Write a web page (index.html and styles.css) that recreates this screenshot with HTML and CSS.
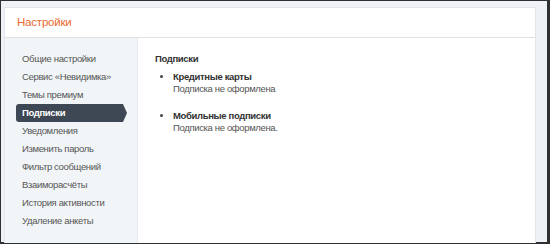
FILE: index.html
```html
<!DOCTYPE html>
<html lang="ru">
<head>
    <meta charset="UTF-8">
    <meta name="viewport" content="width=device-width, initial-scale=1.0">
    <title>Настройки</title>
    <link rel="stylesheet" href="styles.css">
</head>
<body>
    <div class="frame">
      <div class="panel">
        <div class="panelHead">Настройки</div>
        <div class="panelBody">
          <ul class="sideMenu">
            <li>Общие настройки</li>
            <li>Сервис «Невидимка»</li>
            <li>Темы премиум</li>
            <li class="active">Подписки</li>
            <li>Уведомления</li>
            <li>Изменить пароль</li>
            <li>Фильтр сообщений</li>
            <li>Взаиморасчёты</li>
            <li>История активности</li>
            <li>Удаление анкеты</li>
          </ul>
          <div class="content">
            <h2 class="contentTitle">Подписки</h2>
            <ul class="subList">
              <li>
                <b>Кредитные карты</b>
                <span>Подписка не оформлена</span>
              </li>
              <li>
                <b>Мобильные подписки</b>
                <span>Подписка не оформлена.</span>
              </li>
            </ul>
          </div>
        </div>
      </div>
    </div>
</body>
</html>
```

FILE: styles.css
```css
html, body {
  margin: 0;
  padding: 0;
  height: 100%;
}
body {
  font-family: "Liberation Sans", Arial, sans-serif;
  font-size: 9.5px;
  letter-spacing: -0.35px;
  color: #444;
  background: #2b2b2b;
}
.frame {
  box-sizing: border-box;
  height: 244px;
  border-style: solid;
  border-color: #2f2f2f;
  border-width: 1px 3px 2px 1px;
  background: #eef2f6;
  padding: 6px 11px 0 3px;
}
.panel {
  height: 100%;
  background: #fff;
  border: 1px solid #e2e6ea;
  border-bottom: none;
  display: flex;
  flex-direction: column;
}
.panelHead {
  height: 29px;
  line-height: 29px;
  padding-left: 12px;
  font-size: 11.5px;
  letter-spacing: -0.2px;
  color: #ea6a30;
  border-bottom: 1px solid #e0e0e0;
}
.panelBody {
  flex: 1;
  display: flex;
}
.sideMenu {
  list-style: none;
  margin: 0;
  padding: 12px 0 0 11px;
  width: 121px;
  background: #f2f5f8;
  border-right: 1px solid #e6eaee;
}
.sideMenu li {
  height: 18px;
  line-height: 18px;
  padding-left: 6px;
  color: #555;
}
.sideMenu li.active {
  position: relative;
  width: 101px;
  background: #3e4754;
  color: #fff;
  font-weight: bold;
  border-radius: 3px 0 0 3px;
}
.sideMenu li.active::after {
  content: "";
  position: absolute;
  right: -4px;
  top: 0;
  border-style: solid;
  border-width: 9px 0 9px 4px;
  border-color: transparent transparent transparent #3e4754;
}
.content {
  flex: 1;
  padding: 12px 17px;
}
.contentTitle {
  margin: 0;
  height: 18px;
  line-height: 18px;
  font-size: 9.5px;
  font-weight: bold;
  color: #333;
}
.subList {
  margin: 0;
  padding: 0 0 0 18px;
  list-style: disc;
}
.subList li {
  line-height: 12px;
  margin-bottom: 12px;
  padding-top: 3px;
}
.subList b {
  display: block;
  color: #333;
}
.subList span {
  display: block;
  color: #555;
}
```
